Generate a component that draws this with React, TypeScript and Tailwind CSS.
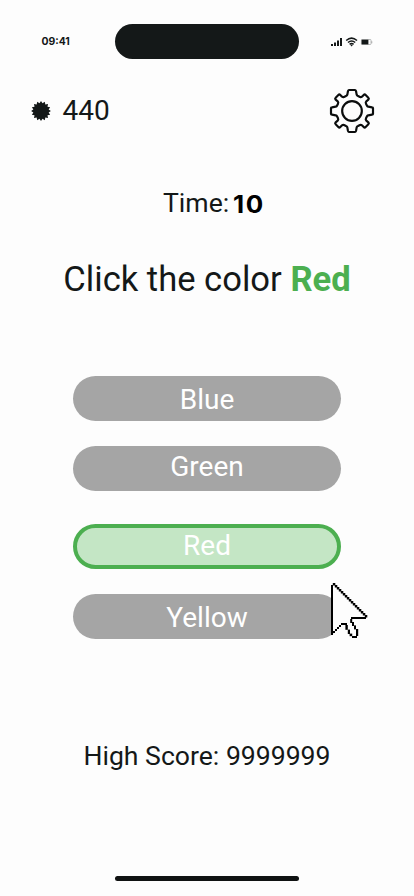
const cursorOutline: [number, number, number, number][] = [
  [0, 1, 1, 25],
  [10, 17, 7.5, 1],
  [9.6, 18, 1, 2],
  [10.5, 19.5, 1, 2],
  [11.5, 21.2, 1, 2],
  [12.5, 23, 1.1, 3.5],
  [10.5, 26.5, 2.5, 1],
  [9.3, 25.3, 1.3, 1.3],
  [8.4, 23.3, 1.1, 2.2],
  [7.2, 21, 1.2, 2.4],
  [5, 20, 3, 1],
  [4, 21, 1, 1],
  [3, 22, 1, 1],
  [2, 23, 1, 1],
  [1, 24, 1, 1],
];

function Cursor() {
  return (
    <svg className="absolute left-[331px] top-[582.5px]" width="37" height="57" viewBox="0 0 18.5 28.5">
      <path d="M1 1 L17 17 H10 L13 26 L10.5 27 L7.5 20.5 H5 L1 25Z" fill="#fdfdfd" />
      {Array.from({ length: 17 }, (_, i) => (
        <rect key={i} x={i + 0.9} y={i} width="1.25" height="1.25" />
      ))}
      {cursorOutline.map(([x, y, w, h]) => (
        <rect key={`${x}-${y}`} x={x} y={y} width={w} height={h} />
      ))}
    </svg>
  );
}

function Gear() {
  return (
    <svg width="46" height="46" viewBox="-69 -69 138 138" fill="none" stroke="#0b0d0d" strokeWidth="6.5" strokeLinejoin="round">
      <path d="M-9-63H9Q11-63 12-60L14-49Q15-46 18-45L24-42Q27-41 30-43L35-48Q38-51 41-48L49-40Q52-37 49-34L43-29Q40-26 42-22L45-16Q46-14 49-13L60-11Q63-11 63-9V9Q63 11 60 11L49 13Q46 14 45 16L42 22Q40 26 43 29L49 34Q52 37 49 40L41 48Q38 51 35 48L30 43Q27 41 24 42L18 45Q15 46 14 49L12 60Q11 63 9 63H-9Q-11 63-12 60L-14 49Q-15 46-18 45L-24 42Q-27 41-30 43L-35 48Q-38 51-41 48L-49 40Q-52 37-49 34L-43 29Q-40 26-42 22L-45 16Q-46 14-49 13L-60 11Q-63 11-63 9V-9Q-63-11-60-11L-49-13Q-46-14-45-16L-42-22Q-40-26-43-29L-49-34Q-52-37-49-40L-41-48Q-38-51-35-48L-30-43Q-27-41-24-42L-18-45Q-15-46-14-49L-12-60Q-11-63-9-63Z" />
      <circle r="29.5" />
    </svg>
  );
}

const burst = Array.from({ length: 32 }, (_, i) => {
  const r = i % 2 ? 7.8 : 9.9;
  const a = (i * Math.PI) / 16;
  return `${(r * Math.sin(a)).toFixed(2)},${(-r * Math.cos(a)).toFixed(2)}`;
}).join(" ");

const options = [
  { label: "Blue", box: "bg-[#a5a5a5]", text: "top-[1px]" },
  { label: "Green", box: "bg-[#a5a5a5] mt-[24.5px]", text: "-top-[1px]" },
  { label: "Red", box: "bg-[#c4e6c5] border-4 border-[#4caf50] mt-[33px]", text: "top-0" },
  { label: "Yellow", box: "bg-[#a5a5a5] mt-[25px]", text: "top-[2px]" },
];

export default function App() {
  return (
    <main className="relative flex h-[896px] w-[414px] flex-col items-center overflow-hidden bg-[#fdfdfd] font-['Roboto',sans-serif] text-[#141818]">
      <header className="mt-6 flex h-[35px] w-full items-center">
        <div className="w-[115px] pl-[41.5px] pt-[2px] font-['Inter',sans-serif] text-[10.4px] font-bold leading-none">09:41</div>
        <div className="h-[35px] w-[184px] rounded-full bg-[#141818]" />
        <svg className="ml-8" width="42" height="10" viewBox="0 0 42 10" fill="#141818">
          <path d="M0 7h2v2H0zM3 5.5h2V9H3zM6 3.5h2V9H6zM9 1h2v8H9z" />
          <g fill="none" stroke="#141818" strokeWidth="1.6">
            <path d="M15.2 3.5q5.3-4.6 10.8 0M17 5.5q3.6-3 7.2 0M18.6 7.3q2-1.6 4 0" />
          </g>
          <path d="M19.4 8l1.2-.6 1.2.6-1.2 1.5z" />
          <rect x="30.4" y="2.5" width="9.6" height="5" rx=".7" fill="none" stroke="#8c8e8e" strokeWidth=".6" />
          <rect x="30.6" y="2.7" width="6.8" height="4.7" />
          <path d="M40.5 4.2h.7v2h-.7z" fill="#8c8e8e" />
        </svg>
      </header>
      <div className="mt-[29px] flex h-[46px] w-full items-center pl-[31px] pr-[39px]">
        <svg width="20" height="20" viewBox="-10 -10 20 20" fill="#141818">
          <polygon points={burst} />
        </svg>
        <span className="ml-[11.5px] text-[28px] leading-none">440</span>
        <div className="ml-auto"><Gear /></div>
      </div>
      <div className="mt-[53px] flex h-8 w-full items-center pl-[163px] leading-none">
        <span className="w-[70px] text-[26.6px]">Time:</span>
        <span className="mt-[4px] origin-left scale-x-[1.08] font-['Inter',sans-serif] text-[24px] font-bold tracking-[1.5px] text-black">10</span>
      </div>
      <h1 className="mt-[39px] h-[42px] whitespace-nowrap text-[34.6px] leading-[42px]">
        Click the color <strong className="font-bold text-[#4caf50]">Red</strong>
      </h1>
      <div className="mt-[76px] flex w-[268px] flex-col">
        {options.map(({ label, box, text }) => (
          <button key={label} className={`flex h-[45px] items-center justify-center rounded-full text-[28px] leading-none text-white ${box}`}>
            <span className={`relative ${text}`}>{label}</span>
          </button>
        ))}
      </div>
      <p className="mt-[101px] whitespace-nowrap text-[26.6px] leading-8">High Score: 9999999</p>
      <div className="mb-[15px] mt-auto h-[5px] w-[184px] rounded-full bg-[#101212]" />
      <Cursor />
    </main>
  );
}
